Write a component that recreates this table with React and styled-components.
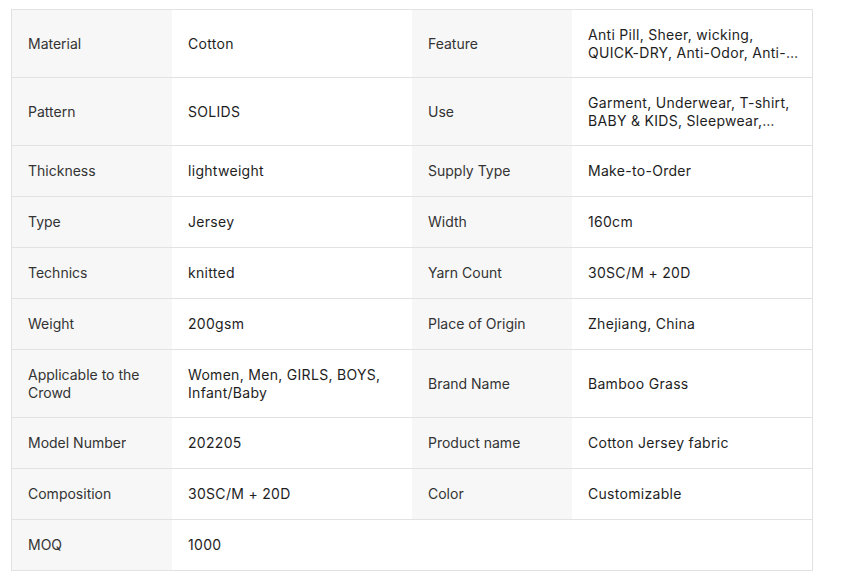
import React from "react";
import styled, { createGlobalStyle } from "styled-components";

const Global = createGlobalStyle`
  html, body { margin: 0; padding: 0; background: #ffffff; }
  body { font-family: Inter, "Noto Sans", "Liberation Sans", sans-serif; }
`;

const Page = styled.div`
  padding: 9px 0 0 11px;
`;

const Table = styled.div`
  width: 800px;
  border: 1px solid #e2e2e2;
  display: flex;
  flex-direction: column;
`;

const Row = styled.div`
  display: grid;
  grid-template-columns: 160px 240px 160px 240px;
  border-bottom: 1px solid #e2e2e2;
  &:last-child { border-bottom: none; }
`;

const Cell = styled.div`
  box-sizing: border-box;
  padding: 16px ${(p) => (p.$label ? "16px" : "12px")} 16px 16px;
  min-height: 50px;
  font-size: 14px;
  line-height: 17.5px;
  display: flex;
  align-items: center;
  background: ${(p) => (p.$label ? "#f7f7f7" : "#ffffff")};
  color: ${(p) => (p.$label ? "#333333" : "#1e1e1e")};
  letter-spacing: ${(p) => (p.$label ? "0" : "0.3px")};
`;

const Clamp = styled.span`
  display: -webkit-box;
  -webkit-line-clamp: 2;
  -webkit-box-orient: vertical;
  overflow: hidden;
  word-break: break-word;
`;

const rows = [
  ["Material", "Cotton", "Feature", "Anti Pill, Sheer, wicking, QUICK-DRY, Anti-Odor, Anti-Static, Shrink-Resistant"],
  ["Pattern", "SOLIDS", "Use", "Garment, Underwear, T-shirt, BABY & KIDS, Sleepwear, Home Textile"],
  ["Thickness", "lightweight", "Supply Type", "Make-to-Order"],
  ["Type", "Jersey", "Width", "160cm"],
  ["Technics", "knitted", "Yarn Count", "30SC/M + 20D"],
  ["Weight", "200gsm", "Place of Origin", "Zhejiang, China"],
  ["Applicable to the Crowd", "Women, Men, GIRLS, BOYS, Infant/Baby", "Brand Name", "Bamboo Grass"],
  ["Model Number", "202205", "Product name", "Cotton Jersey fabric"],
  ["Composition", "30SC/M + 20D", "Color", "Customizable"],
  ["MOQ", "1000", null, null],
];

export default function App() {
  return (
    <Page>
      <Global />
      <Table>
        {rows.map((r, i) => (
          <Row key={i}>
            <Cell $label><Clamp>{r[0]}</Clamp></Cell>
            <Cell><Clamp>{r[1]}</Clamp></Cell>
            {r[2] !== null ? (
              <>
                <Cell $label><Clamp>{r[2]}</Clamp></Cell>
                <Cell><Clamp>{r[3]}</Clamp></Cell>
              </>
            ) : (
              <>
                <Cell />
                <Cell />
              </>
            )}
          </Row>
        ))}
      </Table>
    </Page>
  );
}
